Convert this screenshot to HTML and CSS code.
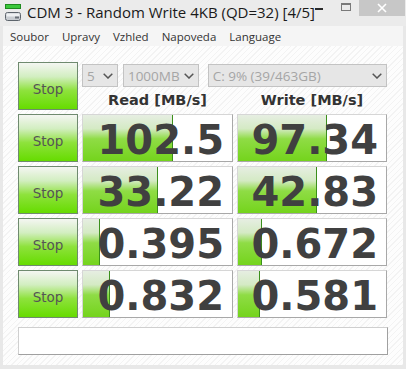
FILE: index.html
```html
<!DOCTYPE html>
<html>
<head>
<meta charset="utf-8">
<link rel="stylesheet" href="styles.css">
</head>
<body>
<div class="window">
  <div class="titlebar">
    <svg class="app-icon" width="17" height="18" viewBox="0 0 17 18">
      <rect x="0.5" y="0.5" width="15" height="4" fill="#3cc83c" stroke="#1f8a1f"/>
      <rect x="0.5" y="8.5" width="15" height="8" rx="2" fill="#c9cdd2" stroke="#5d646c"/>
      <rect x="1.5" y="9.5" width="13" height="3" fill="#eef0f2"/>
      <rect x="10" y="12.5" width="4" height="2" fill="#6a7078"/>
    </svg>
    <span class="title">CDM 3 - Random Write 4KB (QD=32) [4/5]</span>
    <div class="controls">
      <span class="ctl-min"></span>
      <span class="ctl-max"></span>
      <span class="ctl-close">
        <svg width="10" height="10" viewBox="0 0 10 10"><path d="M1 1L9 9M9 1L1 9" stroke="#fff" stroke-width="1.6"/></svg>
      </span>
    </div>
  </div>
  <div class="menubar">
    <span class="menu-item">Soubor</span>
    <span class="menu-item">Upravy</span>
    <span class="menu-item">Vzhled</span>
    <span class="menu-item">Napoveda</span>
    <span class="menu-item">Language</span>
  </div>
  <div class="client">
    <div class="grid">
      <div class="stop">Stop</div>
      <div class="top-controls">
        <div class="combos">
          <div class="combo combo-count"><span>5</span><svg class="chev" width="10" height="6" viewBox="0 0 10 6"><path d="M0.7 0.7L5 5L9.3 0.7" fill="none" stroke="#555" stroke-width="1.5"/></svg></div>
          <div class="combo combo-size"><span>1000MB</span><svg class="chev" width="10" height="6" viewBox="0 0 10 6"><path d="M0.7 0.7L5 5L9.3 0.7" fill="none" stroke="#555" stroke-width="1.5"/></svg></div>
          <div class="combo combo-drive"><span>C: 9% (39/463GB)</span><svg class="chev" width="10" height="6" viewBox="0 0 10 6"><path d="M0.7 0.7L5 5L9.3 0.7" fill="none" stroke="#555" stroke-width="1.5"/></svg></div>
        </div>
        <div class="headers">
          <div class="header">Read [MB/s]</div>
          <div class="header">Write [MB/s]</div>
        </div>
      </div>

      <div class="stop">Stop</div>
      <div class="value" style="--w:90px">102.5</div>
      <div class="value" style="--w:89px">97.34</div>

      <div class="stop">Stop</div>
      <div class="value" style="--w:75px">33.22</div>
      <div class="value" style="--w:79px">42.83</div>

      <div class="stop">Stop</div>
      <div class="value" style="--w:17px">0.395</div>
      <div class="value" style="--w:24px">0.672</div>

      <div class="stop">Stop</div>
      <div class="value" style="--w:27px">0.832</div>
      <div class="value" style="--w:22px">0.581</div>
    </div>
    <div class="status"></div>
  </div>
</div>
</body>
</html>
```
FILE: styles.css
```css
* { box-sizing: border-box; }
html, body { margin: 0; padding: 0; }
body {
  width: 406px;
  height: 369px;
  overflow: hidden;
  background: #e8e8e8;
  font-family: "Open Sans", "Noto Sans", sans-serif;
}
.window {
  width: 406px;
  height: 369px;
  background: #e8e8e8;
  display: flex;
  flex-direction: column;
}
.titlebar {
  height: 26px;
  display: flex;
  align-items: flex-start;
  background: #ebebeb;
  position: relative;
}
.app-icon {
  margin: 4px 0 0 5px;
  flex: none;
}
.title {
  margin: 2px 0 0 5px;
  font-size: 15px;
  line-height: 20px;
  color: #1a1a1a;
  white-space: nowrap;
}
.controls {
  margin-left: auto;
  display: flex;
  align-items: flex-start;
  height: 16px;
}
.ctl-min {
  width: 8px;
  height: 2px;
  background: #2a2a2a;
  margin: 8px 18px 0 0;
}
.ctl-max {
  width: 10px;
  height: 8px;
  border: 1px solid #7a7a7a;
  border-top-width: 2px;
  margin: 3px 8px 0 0;
}
.ctl-close {
  width: 46px;
  height: 16px;
  background: #c7c7c7;
  display: flex;
  align-items: center;
  justify-content: center;
  margin-right: 1px;
}
.menubar {
  height: 20px;
  margin: 0 3px;
  background: #f5f5f5;
  display: flex;
  align-items: center;
  padding-left: 7px;
  gap: 13px;
  font-size: 11.5px;
  color: #333;
}
.client {
  flex: 1;
  margin: 0 3px 4px 3px;
  padding: 16px 0 0 15px;
  background-color: #fbfbfb;
  background-image: repeating-linear-gradient(135deg, #fdfdfd 0 3px, #f3f3f3 3px 4px);
}
.grid {
  display: grid;
  grid-template-columns: 60px 151px 150px;
  grid-auto-rows: 48px;
  column-gap: 4px;
  row-gap: 4px;
}
.stop {
  border: 1px solid #6f8a6f;
  background: linear-gradient(to bottom, #f4f6f2 0%, #d2eec0 30%, #8ee23c 60%, #66dc00 100%);
  font-family: "DejaVu Sans", sans-serif;
  font-size: 13.5px;
  color: #555;
  display: flex;
  align-items: center;
  justify-content: center;
  padding-top: 5px;
}
.top-controls {
  grid-column: 2 / 4;
  display: flex;
  flex-direction: column;
}
.combos {
  display: flex;
  margin-top: 2px;
  height: 23px;
}
.combo {
  height: 23px;
  border: 1px solid #c3c3c3;
  background: #e6e6e6;
  color: #a5a5a5;
  font-size: 13.5px;
  display: flex;
  align-items: center;
  padding: 0 4px 0 4px;
}
.combo span { flex: 1; white-space: nowrap; }
.combo-count { width: 36px; }
.combo-size { width: 76px; margin-left: 5px; }
.combo-drive { width: 180px; margin-left: 9px; }
.chev { flex: none; }
.headers {
  display: grid;
  grid-template-columns: 151px 150px;
  column-gap: 4px;
  margin-top: 5px;
}
.header {
  text-align: center;
  font-family: "DejaVu Sans", sans-serif;
  font-weight: bold;
  font-size: 14.5px;
  line-height: 17px;
  color: #333;
}
.value {
  border: 1px solid;
  border-color: #d6d6d6 #a8a8a8 #a8a8a8 #d6d6d6;
  background-color: #fff;
  background-image:
    linear-gradient(to right, transparent calc(var(--w) - 1px), #3b8f1c calc(var(--w) - 1px), #3b8f1c var(--w), transparent var(--w)),
    linear-gradient(to bottom, #e6eee2 0%, #d4eac4 30%, #8fdc45 52%, #74d41c 100%);
  background-repeat: no-repeat;
  background-size: 100% 100%, var(--w) 100%;
  font-family: "DejaVu Sans", sans-serif;
  font-weight: bold;
  font-size: 40px;
  line-height: 46px;
  padding-top: 2px;
  color: #404040;
  text-align: right;
  padding-right: 8px;
  white-space: nowrap;
}
.status {
  margin-top: 9px;
  width: 370px;
  height: 28px;
  border: 1px solid;
  border-color: #cfcfcf #a0a0a0 #a0a0a0 #cfcfcf;
  background: #fff;
}
```
